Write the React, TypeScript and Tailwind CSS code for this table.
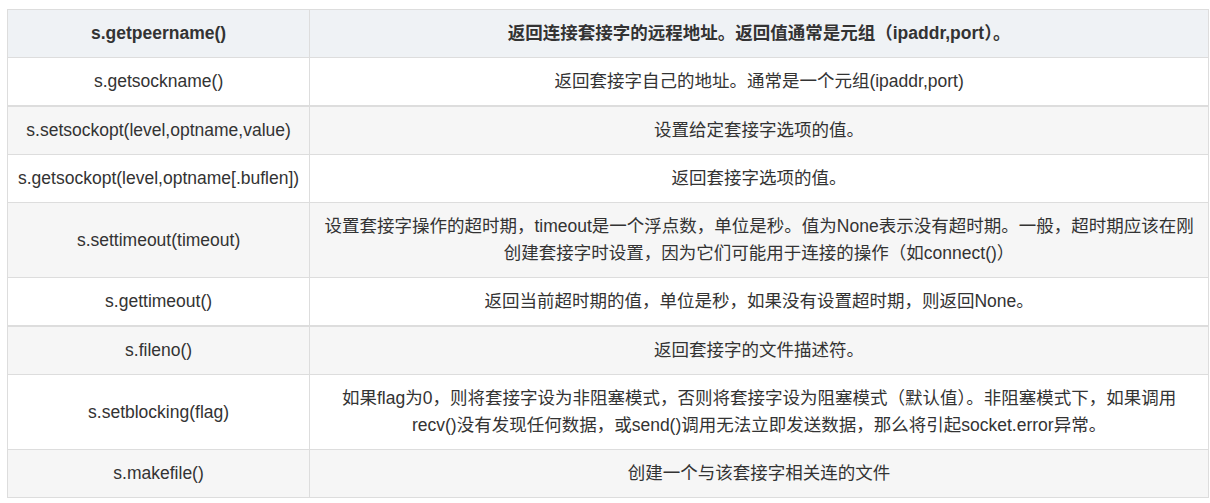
const rows: { name: string; desc: React.ReactNode; thick?: boolean }[] = [
    { name: "s.getsockname()", desc: "返回套接字自己的地址。通常是一个元组(ipaddr,port)", thick: true },
    { name: "s.setsockopt(level,optname,value)", desc: "设置给定套接字选项的值。" },
    { name: "s.getsockopt(level,optname[.buflen])", desc: "返回套接字选项的值。" },
    {
        name: "s.settimeout(timeout)",
        desc: (
            <>
                设置套接字操作的超时期，timeout是一个浮点数，单位是秒。值为None表示没有超时期。一般，超时期应该在刚
                <br />
                创建套接字时设置，因为它们可能用于连接的操作（如connect()）
            </>
        ),
    },
    { name: "s.gettimeout()", desc: "返回当前超时期的值，单位是秒，如果没有设置超时期，则返回None。", thick: true },
    { name: "s.fileno()", desc: "返回套接字的文件描述符。" },
    {
        name: "s.setblocking(flag)",
        desc: (
            <>
                如果flag为0，则将套接字设为非阻塞模式，否则将套接字设为阻塞模式（默认值）。非阻塞模式下，如果调用
                <br />
                recv()没有发现任何数据，或send()调用无法立即发送数据，那么将引起socket.error异常。
            </>
        ),
    },
    { name: "s.makefile()", desc: "创建一个与该套接字相关连的文件" },
];

export default function App() {
    return (
        <div className="bg-white w-[1210px] h-[503px] pt-[9px] pl-[7px] font-['Liberation_Sans','Noto_Sans_CJK_SC',sans-serif] text-[17.5px] text-[#333]">
            <table className="w-[1202px] border-collapse border border-[#ddd]">
                <tbody>
                    {/* Header row */}
                    <tr className="bg-[#eff2f5]">
                        <td className="w-[302px] border border-[#ddd] px-[10px] py-[10px] leading-[27px] text-center font-bold">
                            s.getpeername()
                        </td>
                        <td className="border border-[#ddd] px-[10px] py-[10px] leading-[27px] text-center font-bold">
                            返回连接套接字的远程地址。返回值通常是元组（ipaddr,port）。
                        </td>
                    </tr>
                    {rows.map((row, idx) => (
                        <tr
                            key={row.name}
                            className={`${idx % 2 === 1 ? "bg-[#f6f6f6]" : "bg-white"} ${
                                row.thick ? "border-b-2 border-b-[#ddd]" : ""
                            }`}
                        >
                            <td className="border border-[#ddd] px-[10px] py-[10px] leading-[27px] text-center whitespace-nowrap">
                                {row.name}
                            </td>
                            <td className="border border-[#ddd] px-[10px] py-[10px] leading-[27px] text-center">
                                {row.desc}
                            </td>
                        </tr>
                    ))}
                </tbody>
            </table>
        </div>
    );
}
